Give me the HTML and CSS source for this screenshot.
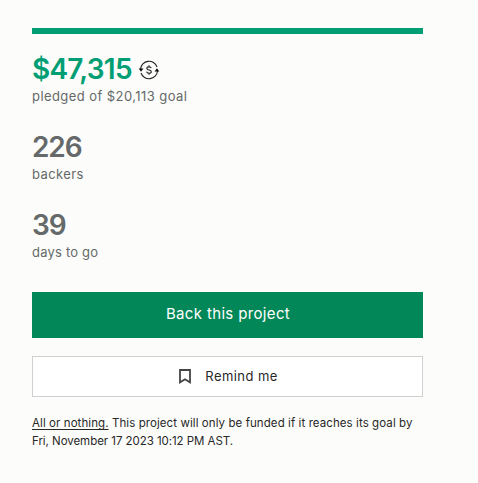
FILE: index.html
```html
<!DOCTYPE html>
<html lang="en">
<head>
<meta charset="utf-8">
<title>Project funding</title>
<link rel="stylesheet" href="styles.css">
</head>
<body>
<main class="funding">
  <div class="progress"></div>
  <section class="stat pledged">
    <div class="amount-row">
      <span class="value amount">$47,315</span>
      <svg class="convert" width="22" height="20" viewBox="0 0 22 20" fill="none" stroke="#222" stroke-width="1.1">
        <path d="M2.500 9A8.500 8.500 0 0 1 19 7M19.500 11A8.500 8.500 0 0 1 3 13"/>
        <path d="M.7 8.500h4.800L3 11.700zM16.500 11.500h4.800L19 8.300z" fill="#111" stroke="none"/>
        <path d="M13.200 8.200c-.2-.9-1-1.300-2.200-1.300s-2.200.5-2.200 1.500c0 2.200 4.500 1.100 4.500 3.300 0 1-.9 1.500-2.300 1.500-1.300 0-2.200-.5-2.400-1.500M11 5.300v1.600M11 13v1.700"/>
      </svg>
    </div>
    <div class="label goal">pledged of $20,113 goal</div>
  </section>
  <section class="stat">
    <div class="value">226</div>
    <div class="label">backers</div>
  </section>
  <section class="stat">
    <div class="value">39</div>
    <div class="label days">days to go</div>
  </section>
  <button class="button back">Back this project</button>
  <button class="button remind">
    <svg width="12" height="15" viewBox="0 0 12 15" fill="none" stroke="#444" stroke-width="1.8"><path d="M1 1h10v12.300l-5-3-5 3z"/></svg>
    <span>Remind me</span>
  </button>
  <p class="note"><span class="line"><a href="#">All or nothing.</a> This project will only be funded if it reaches its goal by</span><span class="line date">Fri, November 17 2023 10:12 PM AST.</span></p>
</main>
</body>
</html>
```
FILE: styles.css
```css
* { box-sizing: border-box; }
body { margin: 0; background: #fcfcfa; color: #282828; font-family: Inter, "Liberation Sans", sans-serif; }
.funding { width: 391px; margin-left: 32px; padding-top: 28px; }
.progress { height: 6px; background: #009e74; }
.stat { height: 78px; color: #656969; }
.pledged { height: 94px; padding-top: 16px; }
.amount-row { display: flex; }
.value { height: 37px; font-size: 28px; line-height: 38px; font-weight: 600; letter-spacing: -1.1px; }
.amount { width: 106px; color: #009e74; letter-spacing: -0.75px; }
.convert { margin-top: 10px; }
.label { font-size: 13px; line-height: 18px; letter-spacing: 0.4px; }
.goal { letter-spacing: 0.43px; }
.days { letter-spacing: 0.2px; }
.button { display: flex; width: 391px; align-items: center; justify-content: center; border: 0; font-family: inherit; }
.back { height: 46px; margin-top: 8px; padding: 0 0 3px 1px; background: #028858; color: #fff; font-size: 15px; letter-spacing: 0.35px; }
.remind { height: 41px; margin-top: 18px; padding: 0 0 1px 2px; gap: 14px; border: 1px solid #d0d0d0; background: #fff; color: #282828; font-size: 13px; letter-spacing: 0.43px; }
.note { margin: 17px 0 0; font-size: 11.500px; line-height: 18px; letter-spacing: 0.08px; }
.line { display: block; white-space: nowrap; }
.date { letter-spacing: -0.05px; }
.note a { color: inherit; text-underline-offset: 2px; }
```
